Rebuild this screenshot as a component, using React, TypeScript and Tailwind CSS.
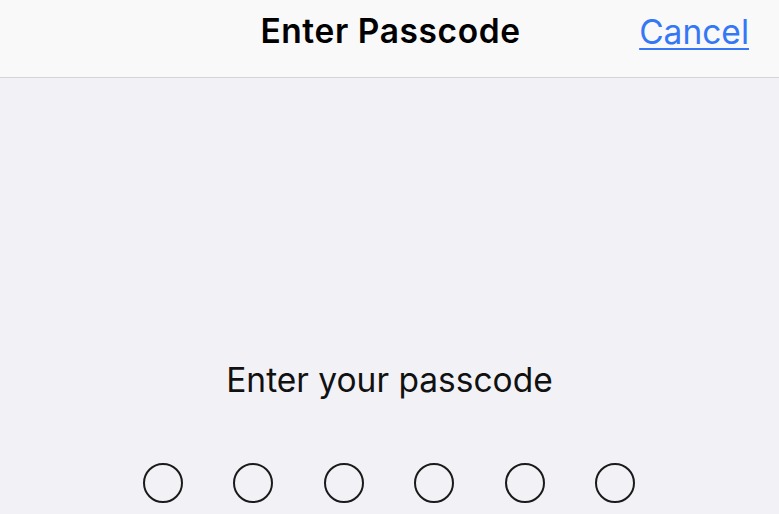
import React from "react";

export default function App() {
  return (
    <div className="w-[779px] h-[514px] overflow-hidden bg-[#f2f2f6] flex flex-col" style={{ fontFamily: "Inter, 'Liberation Sans', sans-serif" }}>
      <div className="h-[78px] shrink-0 bg-[#f9f9f9] border-b border-[#d4d4d8] relative flex justify-center pt-[14.5px] pl-[2px]">
        <div className="text-[33.5px] leading-none font-semibold text-black tracking-[0.6px]">Enter Passcode</div>
        <a className="absolute right-[30px] top-[15.5px] text-[33.5px] leading-none text-[#3478f6] underline underline-offset-[4px] decoration-[2px]">Cancel</a>
      </div>
      <div className="flex-1 flex flex-col items-center">
        <div className="mt-[285.5px] text-[33.5px] text-[#111] leading-none">Enter your passcode</div>
        <div className="mt-[66px] flex gap-[50.6px] ml-[-1px]">
          {[0, 1, 2, 3, 4, 5].map((i) => (
            <div key={i} className="w-[40px] h-[40px] rounded-full border-2 border-[#1a1a1a]" />
          ))}
        </div>
      </div>
    </div>
  );
}
